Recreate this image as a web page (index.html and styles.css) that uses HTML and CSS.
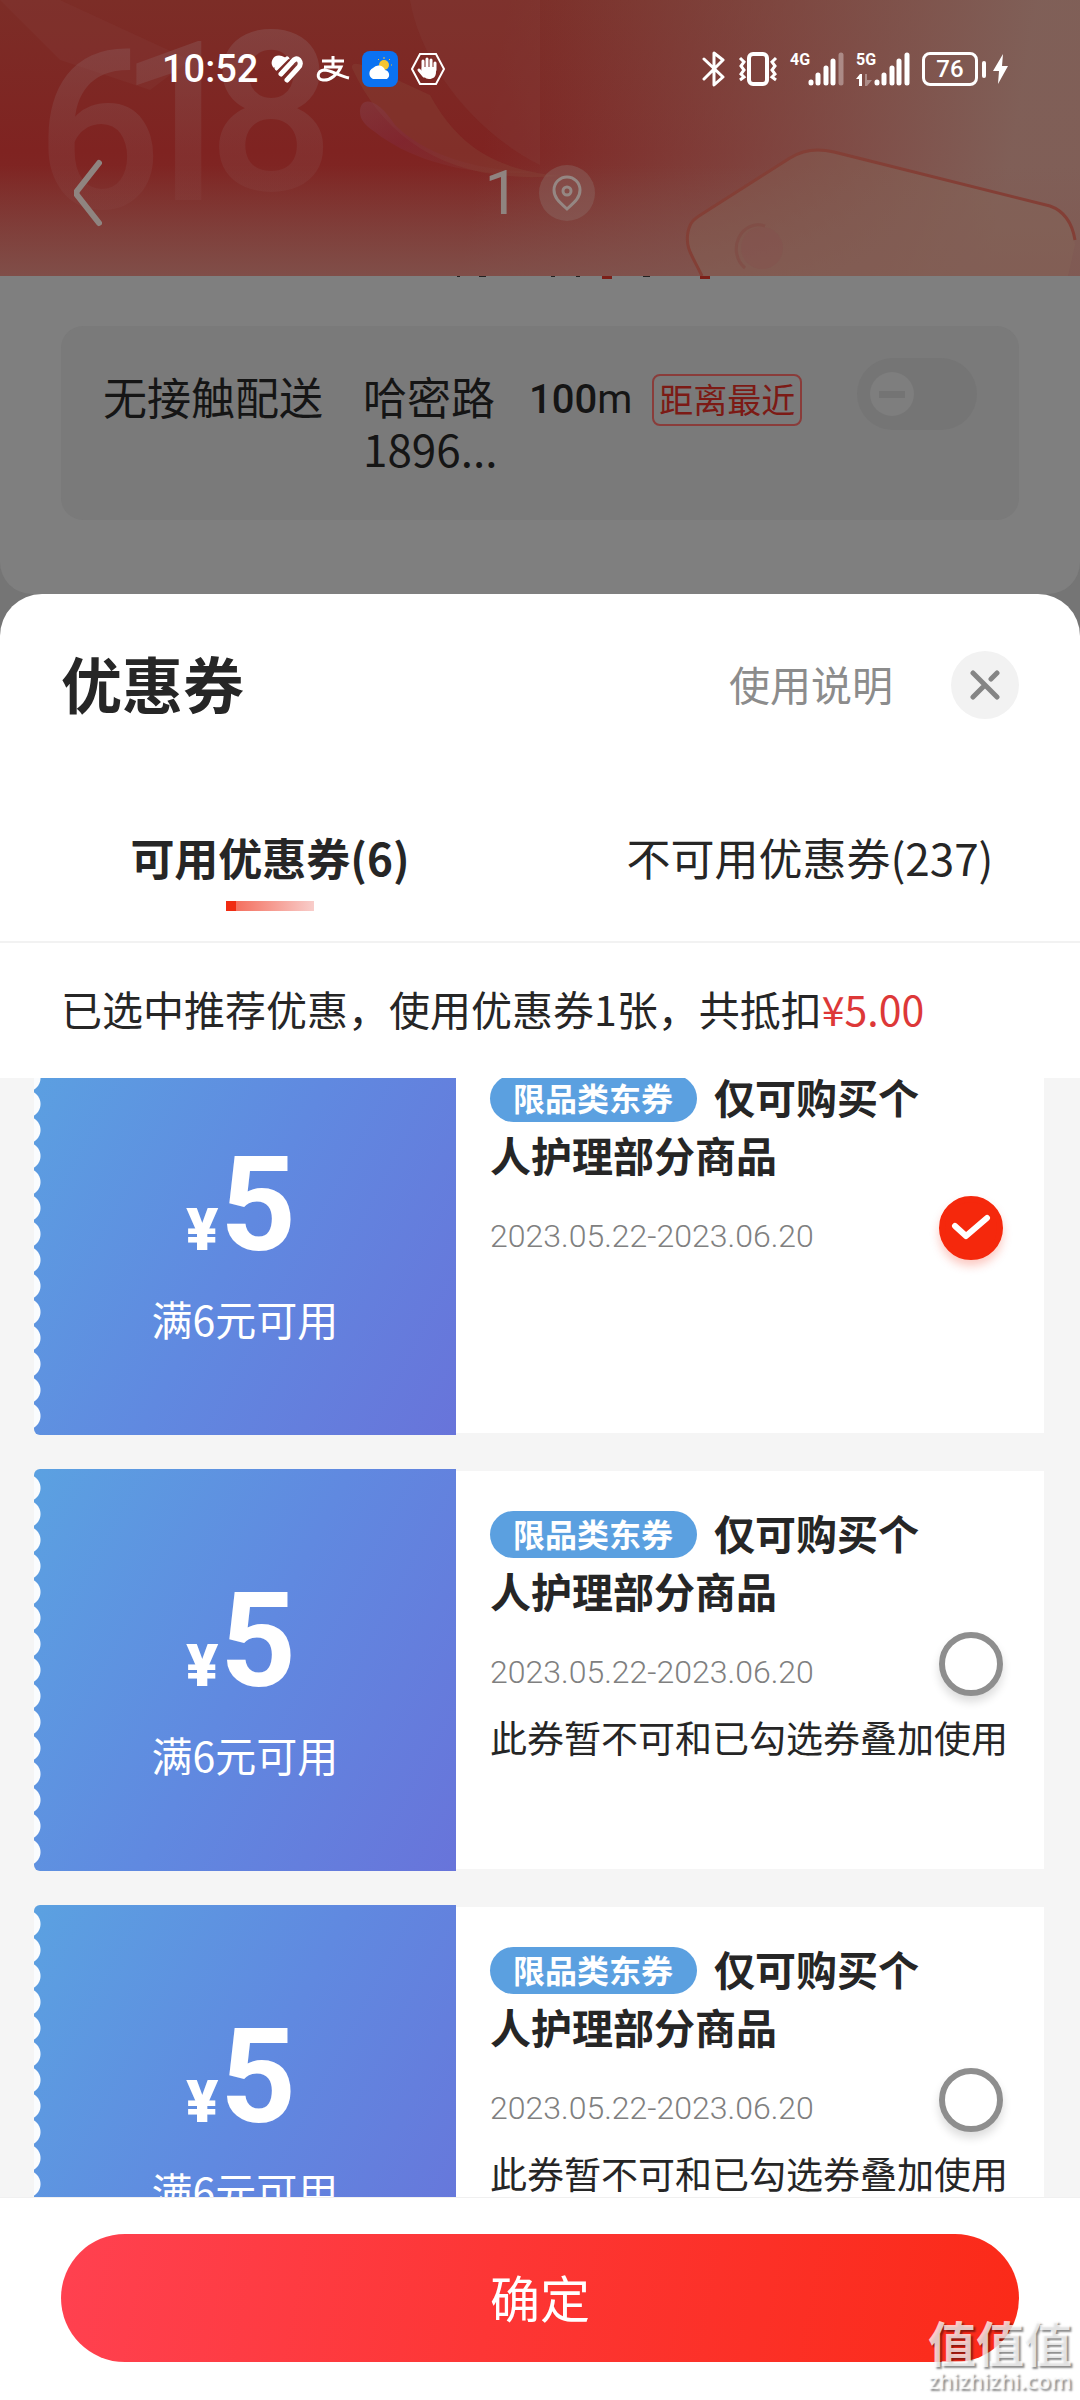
FILE: index.html
```html
<!DOCTYPE html>
<html lang="zh-CN">
<head>
<meta charset="utf-8">
<meta name="viewport" content="width=device-width, initial-scale=1">
<title>优惠券</title>
<link rel="stylesheet" href="styles.css">
</head>
<body>
<div class="app">
  <header class="top">
    <svg class="top-art" viewBox="0 0 1080 276" preserveAspectRatio="xMidYMin slice" aria-hidden="true">
      <defs>
        <linearGradient id="ribbon" x1="0" y1="0" x2="1" y2="1">
          <stop offset="0" stop-color="#85404a" stop-opacity=".5"/>
          <stop offset=".4" stop-color="#82283a" stop-opacity=".5"/>
          <stop offset="1" stop-color="#85483a" stop-opacity=".1"/>
        </linearGradient>
        <linearGradient id="fade" x1="0" y1="30" x2="0" y2="210" gradientUnits="userSpaceOnUse">
          <stop offset="0" stop-color="#8a5555" stop-opacity=".5"/>
          <stop offset="1" stop-color="#8a4a48" stop-opacity=".2"/>
        </linearGradient>
      </defs>
      <path d="M0 0H60L190 60 150 90 60 60Z" fill="#853a36" opacity=".35"/>
      <path d="M410 0C420 60 470 130 540 165V0Z" fill="#84403a" opacity=".3"/>
      <path d="M352 68C350 55 385 75 430 95C460 150 500 170 560 176C450 185 385 140 352 68Z" fill="#87483a" opacity=".35"/>
      <path d="M360 112C360 95 378 98 395 125C430 160 490 172 540 172C470 178 410 160 375 132C366 126 360 120 360 112Z" fill="url(#ribbon)"/>
      <text class="top-digits" x="36 118 208" y="208 200 190" fill="url(#fade)">618</text>
      <path d="M702 276C692 255 685 248 688 232C690 222 694 219 702 214L790 158C804 149 818 148 834 152L1050 206C1068 212 1074 225 1075 245L1068 276Z" fill="#86665a" fill-opacity=".35"/>
      <path d="M702 276C692 255 685 248 688 232C690 222 694 219 702 214L790 158C804 149 818 148 834 152L1050 206C1064 211 1072 222 1075 240" fill="none" stroke="#833f36" stroke-width="3"/>
      <path d="M745 268A22 24 0 0 1 765 226" fill="none" stroke="#80453f" stroke-width="3" opacity=".5"/>
      <circle cx="762" cy="248" r="21" fill="#84504d" opacity=".4"/>
    </svg>
    <div class="status">
      <div class="status-side">
        <span class="clock">10:52</span>
        <svg width="34" height="30" viewBox="0 0 34 30" aria-hidden="true">
          <path d="M5 13 C1 9 4 3 9 3 C13 3 15 6 17 6" fill="#fff" stroke="#fff" stroke-width="3"/>
          <g fill="none" stroke="#fff" stroke-width="5" stroke-linecap="round"><path d="M7 14 17 5"/><path d="M11 20 22 8Q26 3 29 6Q32 10 28 14L17 26"/><path d="M14 23 24 12" stroke="#7d2b27" stroke-width="2"/><path d="M8 17 19 6" stroke="#7d2b27" stroke-width="2"/></g>
        </svg>
        <svg width="34" height="28" viewBox="0 0 34 28" fill="none" stroke="#fff" aria-hidden="true">
          <path d="M6 6H28M17 1V12M8 12H25C22 19 14 26 7 25C0 24 1 16 8 15C15 15 23 21 33 23" stroke-width="3"/>
        </svg>
        <svg width="36" height="36" viewBox="0 0 36 36" aria-hidden="true">
          <rect width="36" height="36" rx="8" fill="#0b72f2"/>
          <circle cx="22" cy="14" r="5" fill="#f5c431"/>
          <path d="M22 6V8M28 8 27 9M30 14H29M16 8 17 9" stroke="#f5c431" stroke-width="1"/>
          <path d="M11 28A6 6 0 0 1 11 17A7 7 0 0 1 23 19A5 5 0 0 1 25 28Z" fill="#fff"/>
        </svg>
        <svg width="36" height="34" viewBox="0 0 36 34" aria-hidden="true">
          <path d="M10 2H26L34 17 26 32H10L2 17Z" fill="none" stroke="#fff" stroke-width="2"/>
          <path d="M13 17V9M17 16V7M21 16V8M25 18V11M9 18 14 24" stroke="#fff" stroke-width="3" stroke-linecap="round"/>
          <path d="M12 15H26V20C26 25 23 27 19 27C15 27 13 24 11 20Z" fill="#fff"/>
        </svg>
      </div>
      <div class="status-side">
        <svg width="24" height="38" viewBox="0 0 24 38" fill="none" stroke="#fff" stroke-width="3" stroke-linecap="round" stroke-linejoin="round" aria-hidden="true"><path d="M2 9 21 27 12 35V3L21 10 2 29"/></svg>
        <svg width="40" height="34" viewBox="0 0 40 34" fill="none" stroke="#fff" aria-hidden="true"><rect x="11" y="2" width="18" height="30" rx="4" stroke-width="4"/><path d="M2 6 6 10 3 14 6 18 3 22 6 25 2 28M38 6 34 10 37 14 34 18 37 22 34 25 38 28" stroke-width="3"/></svg>
        <div class="signal"><span class="net">4G</span>
          <svg width="36" height="34" viewBox="0 0 36 34" stroke="#fff" stroke-width="5" stroke-linecap="round" aria-hidden="true"><path d="M3 30V31M10 23V31M18 16V31M25 9V31"/><path d="M33 3V31" opacity=".35"/></svg>
        </div>
        <div class="signal"><span class="net">5G</span>
          <svg width="36" height="34" viewBox="0 0 36 34" stroke="#fff" stroke-width="5" stroke-linecap="round" aria-hidden="true"><path d="M3 30V31M10 23V31M18 16V31M25 9V31M33 3V31"/></svg>
          <svg class="arrows" width="16" height="12" viewBox="0 0 16 12" fill="#fff" aria-hidden="true"><path d="M0 5 4 0H6V12H3V5Z"/><path d="M9 0H11V6H16L11 12H9Z" opacity=".35"/></svg>
        </div>
        <div class="battery"><span class="battery-level">76</span></div>
        <svg width="15" height="30" viewBox="0 0 15 30" aria-hidden="true"><path d="M10 0 0 17H6L5 30 15 12H9Z" fill="#fff"/></svg>
      </div>
    </div>
    <nav class="nav">
      <button class="back" type="button" aria-label="返回">
        <svg width="28" height="68" viewBox="0 0 28 68" fill="none" stroke="#8f8480" stroke-width="6" stroke-linecap="round" stroke-linejoin="round"><path d="M25 4 3 32Q2 34 3 36L25 64"/></svg>
      </button>
      <div class="place">
        <span class="place-name">1</span>
        <button class="pin" type="button" aria-label="定位">
          <svg width="30" height="36" viewBox="0 0 30 36" fill="none" stroke="#958783" stroke-width="3"><path d="M15 34C6 26 2 22 2 15A13 13 0 0 1 28 15C28 22 24 26 15 34Z"/><circle cx="15" cy="16" r="4"/></svg>
        </button>
      </div>
    </nav>
  </header>

  <main class="order">
    <section class="order-panel">
      <svg class="order-edge" viewBox="0 0 1080 3" aria-hidden="true"><path d="M602 0H612V3H602ZM700 0H710V3H700Z" fill="#7c1f18"/><path d="M457 0H460V1H457ZM479 0H486V1H479ZM551 0H555V1H551ZM576 0H580V1H576ZM643 0H650V1H643Z" fill="#222"/></svg>
      <div class="delivery">
        <span class="delivery-title" id="contactless">无接触配送</span>
        <span class="delivery-place">哈密路1896...</span>
        <span class="distance"><b>100</b>m</span>
        <span class="nearest">距离最近</span>
        <input class="switch" type="checkbox" role="switch" aria-labelledby="contactless">
      </div>
    </section>
  </main>

  <section class="sheet" role="dialog" aria-labelledby="sheet-title">
    <div class="sheet-head">
      <h1 id="sheet-title">优惠券</h1>
      <a class="help" href="#">使用说明</a>
      <button class="close" type="button" aria-label="关闭">
        <svg width="30" height="30" viewBox="0 0 30 30" fill="none" stroke="#858585" stroke-width="5" stroke-linecap="round"><path d="M3 3 27 27M3 27 15 15M21 9 27 3"/></svg>
      </button>
    </div>
    <div class="tabs" role="tablist">
      <button class="tab tab-active" type="button" role="tab" aria-selected="true">可用优惠券(6)</button>
      <button class="tab" type="button" role="tab" aria-selected="false">不可用优惠券(237)</button>
    </div>
    <p class="summary">已选中推荐优惠，使用优惠券1张，共抵扣<span class="saving">¥5.00</span></p>

    <div class="list">
      <div class="coupons">
        <article class="coupon">
          <div class="value">
            <p class="amount"><span class="yen">¥</span>5</p>
            <p class="rule">满6元可用</p>
          </div>
          <div class="detail">
            <label class="name" for="c1"><span class="kind">限品类东券</span>仅可购买个人护理部分商品</label>
            <p class="date">2023.05.22-2023.06.20</p>
            <input class="pick" type="checkbox" id="c1" checked>
            <svg class="tick" width="40" height="28" viewBox="0 0 40 28" fill="none" stroke="#fff" stroke-width="6" stroke-linecap="round" stroke-linejoin="round" aria-hidden="true"><path d="M4 12 15 22 36 4"/></svg>
          </div>
        </article>
        <article class="coupon">
          <div class="value">
            <p class="amount"><span class="yen">¥</span>5</p>
            <p class="rule">满6元可用</p>
          </div>
          <div class="detail">
            <label class="name" for="c2"><span class="kind">限品类东券</span>仅可购买个人护理部分商品</label>
            <p class="date">2023.05.22-2023.06.20</p>
            <input class="pick" type="checkbox" id="c2">
            <p class="note">此券暂不可和已勾选券叠加使用</p>
          </div>
        </article>
        <article class="coupon">
          <div class="value">
            <p class="amount"><span class="yen">¥</span>5</p>
            <p class="rule">满6元可用</p>
          </div>
          <div class="detail">
            <label class="name" for="c3"><span class="kind">限品类东券</span>仅可购买个人护理部分商品</label>
            <p class="date">2023.05.22-2023.06.20</p>
            <input class="pick" type="checkbox" id="c3">
            <p class="note">此券暂不可和已勾选券叠加使用</p>
          </div>
        </article>
      </div>
    </div>

    <footer class="foot">
      <button class="confirm" type="button">确定</button>
    </footer>
  </section>

  <div class="mark"><span class="mark-name">值值值</span><span class="mark-site">zhizhizhi.com</span></div>
</div>
</body>
</html>
```
FILE: styles.css
```css
* {
  box-sizing: border-box;
}

body,
p,
h1 {
  margin: 0;
}

body {
  font-family: "Noto Sans CJK SC", sans-serif;
  color: #262626;
  background: #757575;
}

button {
  margin: 0;
  padding: 0;
  border: 0;
  background: none;
  font: inherit;
  color: inherit;
}

svg {
  display: block;
  flex: none;
}

.app {
  position: relative;
  display: flex;
  flex-direction: column;
  height: 100vh;
  overflow: hidden;
}

/* Header */

.top {
  position: relative;
  padding-bottom: 28px;
  background:
    linear-gradient(to bottom, rgba(128, 88, 82, 0) 60%, rgba(128, 88, 82, .75) 100%),
    linear-gradient(100deg, rgba(128, 98, 90, 0) 45%, rgba(128, 98, 90, .95) 92%),
    linear-gradient(to bottom, #7c2d27, #7f2321 55%, #80302c);
}

.top-art {
  position: absolute;
  inset: 0;
  width: 100%;
  height: 100%;
}

.top-digits {
  font: 500 222px Roboto, sans-serif;
}

.status {
  position: relative;
  display: flex;
  align-items: center;
  justify-content: space-between;
  height: 138px;
  padding: 0 72px 0 162px;
  font-family: Roboto, sans-serif;
  color: #fff;
}

.status-side {
  display: flex;
  align-items: center;
  gap: 12px;
}

.clock {
  font-size: 38px;
  font-weight: 500;
  line-height: 40px;
}

.signal {
  position: relative;
  display: flex;
  align-items: flex-start;
}

.net {
  width: 18px;
  font-size: 16px;
  font-weight: 700;
  line-height: 16px;
}

.arrows {
  position: absolute;
  left: 0;
  bottom: 0;
}

.battery {
  position: relative;
  width: 56px;
  height: 34px;
  margin-right: 3px;
  border: 3px solid #fff;
  border-radius: 8px;
}

.battery::after {
  content: "";
  position: absolute;
  right: -11px;
  top: 6px;
  width: 4px;
  height: 17px;
  border-radius: 2px;
  background: #fff;
}

.battery-level {
  display: block;
  font-size: 24px;
  font-weight: 500;
  line-height: 28px;
  text-align: center;
}

.nav {
  position: relative;
  display: grid;
  grid-template-columns: 1fr auto 1fr;
  align-items: center;
  height: 110px;
  padding: 0 74px;
}

.back {
  justify-self: start;
}

.place {
  display: flex;
  align-items: center;
  gap: 20px;
}

.place-name {
  font: 400 62px/64px Roboto, sans-serif;
  color: #8f8480;
}

.pin {
  display: grid;
  place-items: center;
  width: 56px;
  height: 56px;
  border-radius: 50%;
  background: rgba(140, 110, 106, .4);
}

/* Order page behind the sheet */

.order-panel {
  padding-bottom: 74px;
  border-radius: 0 0 32px 32px;
  background: #7f7f7f;
}

.order-edge {
  width: 100%;
}

.delivery {
  display: flex;
  align-items: flex-start;
  height: 194px;
  margin: 47px 61px 0;
  padding: 44px 42px 0;
  border-radius: 22px;
  background: #7a7a7a;
  font-size: 44px;
  line-height: 52px;
  color: #151515;
}

.delivery-title {
  flex: none;
}

.delivery-place {
  width: 142px;
  margin-left: 40px;
}

.distance {
  margin: 4px 0 0 24px;
  font: 400 40px/52px Roboto, sans-serif;
}

.distance b {
  font-weight: 500;
}

.nearest {
  flex: none;
  height: 52px;
  margin: 4px 0 0 20px;
  padding: 0 5px;
  border: 2px solid #8a3c3a;
  border-radius: 8px;
  font-size: 34px;
  line-height: 46px;
  color: #7c1a15;
}

.switch {
  appearance: none;
  flex: none;
  display: flex;
  align-items: center;
  width: 120px;
  height: 72px;
  margin: -12px 0 0 auto;
  padding: 0 13px;
  border-radius: 36px;
  background: #757575;
}

.switch::before {
  content: "";
  width: 44px;
  height: 44px;
  border-radius: 50%;
  background: linear-gradient(#747474, #747474) center / 26px 7px no-repeat #7e7e7e;
}

/* Coupon sheet */

.sheet {
  position: relative;
  flex: 1;
  display: flex;
  flex-direction: column;
  min-height: 0;
  border-radius: 42px 42px 0 0;
  background: #fff;
}

.sheet-head {
  display: flex;
  align-items: center;
  height: 182px;
  padding: 0 61px;
}

h1 {
  padding-bottom: 4px;
  font-size: 61px;
  font-weight: 700;
  line-height: 72px;
}

.help {
  margin: 0 58px 0 auto;
  padding-bottom: 4px;
  font-size: 41px;
  line-height: 52px;
  color: #8c8c8c;
  text-decoration: none;
}

.close {
  display: grid;
  place-items: center;
  width: 68px;
  height: 68px;
  border-radius: 50%;
  background: #f2f2f2;
}

.tabs {
  display: grid;
  grid-template-columns: 1fr 1fr;
  border-bottom: 2px solid #f2f2f2;
}

.tab {
  display: flex;
  flex-direction: column;
  align-items: center;
  padding: 51px 0 30px;
  font-size: 44px;
  line-height: 60px;
}

.tab-active {
  font-weight: 700;
}

.tab-active::after {
  content: "";
  width: 88px;
  height: 10px;
  margin-top: 14px;
  background: linear-gradient(to right, #f02c12 10px, #f4705f 10px, #f8cdca);
}

.summary {
  padding: 35px 61px 40px;
  font-size: 41px;
  line-height: 60px;
  white-space: nowrap;
}

.saving {
  color: #dd3838;
}

.list {
  flex: 1;
  min-height: 0;
  overflow: hidden;
  background: #f5f5f5;
}

/* The list is scrolled a little way down */
.coupons {
  display: grid;
  gap: 34px;
  margin-top: -45px;
  padding: 0 36px 0 34px;
}

.coupon {
  display: grid;
  grid-template-columns: 422px 1fr;
  min-height: 402px;
}

.value {
  position: relative;
  padding-top: 112px;
  border-radius: 6px 0 0 6px;
  background: linear-gradient(118deg, #5ba1e1, #6089e0 50%, #6874da);
  color: #fff;
  text-align: center;
}

.value::before {
  content: "";
  position: absolute;
  left: 0;
  top: 6px;
  bottom: 6px;
  width: 8px;
  background: radial-gradient(circle at -7px 13px, #fafcfe 13px, transparent 14px) 0 0 / 8px 26px;
}

.amount {
  height: 120px;
  padding-right: 8px;
  font: 700 132px/120px Roboto, sans-serif;
}

.yen {
  margin-right: 2px;
  font-size: 60px;
  font-weight: 900;
}

.rule {
  margin-top: 23px;
  font-size: 41px;
  line-height: 60px;
}

.detail {
  display: grid;
  grid-template-columns: 1fr 64px;
  grid-template-rows: auto 64px auto;
  align-content: start;
  margin: 2px 0;
  padding: 32px 41px 0 34px;
  background: #fff;
}

.name {
  grid-area: 1 / 1;
  margin-bottom: 13px;
  font-size: 41px;
  font-weight: 700;
  line-height: 58px;
}

.kind {
  display: inline-block;
  margin-right: 17px;
  padding: 0 24px 3px 23px;
  border-radius: 24px;
  background: #5ba0e0;
  font-size: 32px;
  line-height: 44px;
  color: #fff;
  vertical-align: 3px;
}

.date {
  grid-area: 2 / 1;
  align-self: end;
  font: 300 32px/48px Roboto, sans-serif;
  color: #808080;
}

.pick {
  appearance: none;
  grid-area: 2 / 2;
  width: 64px;
  height: 64px;
  margin: 0;
  border: 6px solid #8e8e8e;
  border-radius: 50%;
  background: #fff;
  box-shadow: 0 6px 10px rgba(0, 0, 0, .14);
}

.pick:checked {
  border-color: #f5280c;
  background: #f5280c;
  box-shadow: 0 6px 10px rgba(245, 40, 12, .25);
}

.tick {
  grid-area: 2 / 2;
  place-self: center;
  z-index: 1;
  pointer-events: none;
}

.note {
  grid-area: 3 / 1 / 4 / 3;
  margin-top: 15px;
  font-size: 37px;
  line-height: 52px;
  white-space: nowrap;
}

.foot {
  padding: 36px 61px 38px;
  border-top: 1px solid #f0f0f0;
}

.confirm {
  display: block;
  width: 100%;
  height: 128px;
  padding-bottom: 5px;
  border-radius: 64px;
  background: linear-gradient(100deg, #ff4150, #fd3635 45%, #fb2a18);
  font-size: 50px;
  color: #fff;
}

/* Site watermark */

.mark {
  position: absolute;
  right: 8px;
  bottom: 6px;
  display: grid;
  justify-items: center;
  color: rgba(255, 255, 255, .75);
  text-shadow: 2px 2px 2px rgba(0, 0, 0, .45);
  pointer-events: none;
}

.mark-name {
  font-size: 48px;
  font-weight: 700;
  line-height: 50px;
}

.mark-site {
  font: 600 22px/28px "Open Sans", sans-serif;
}
```
